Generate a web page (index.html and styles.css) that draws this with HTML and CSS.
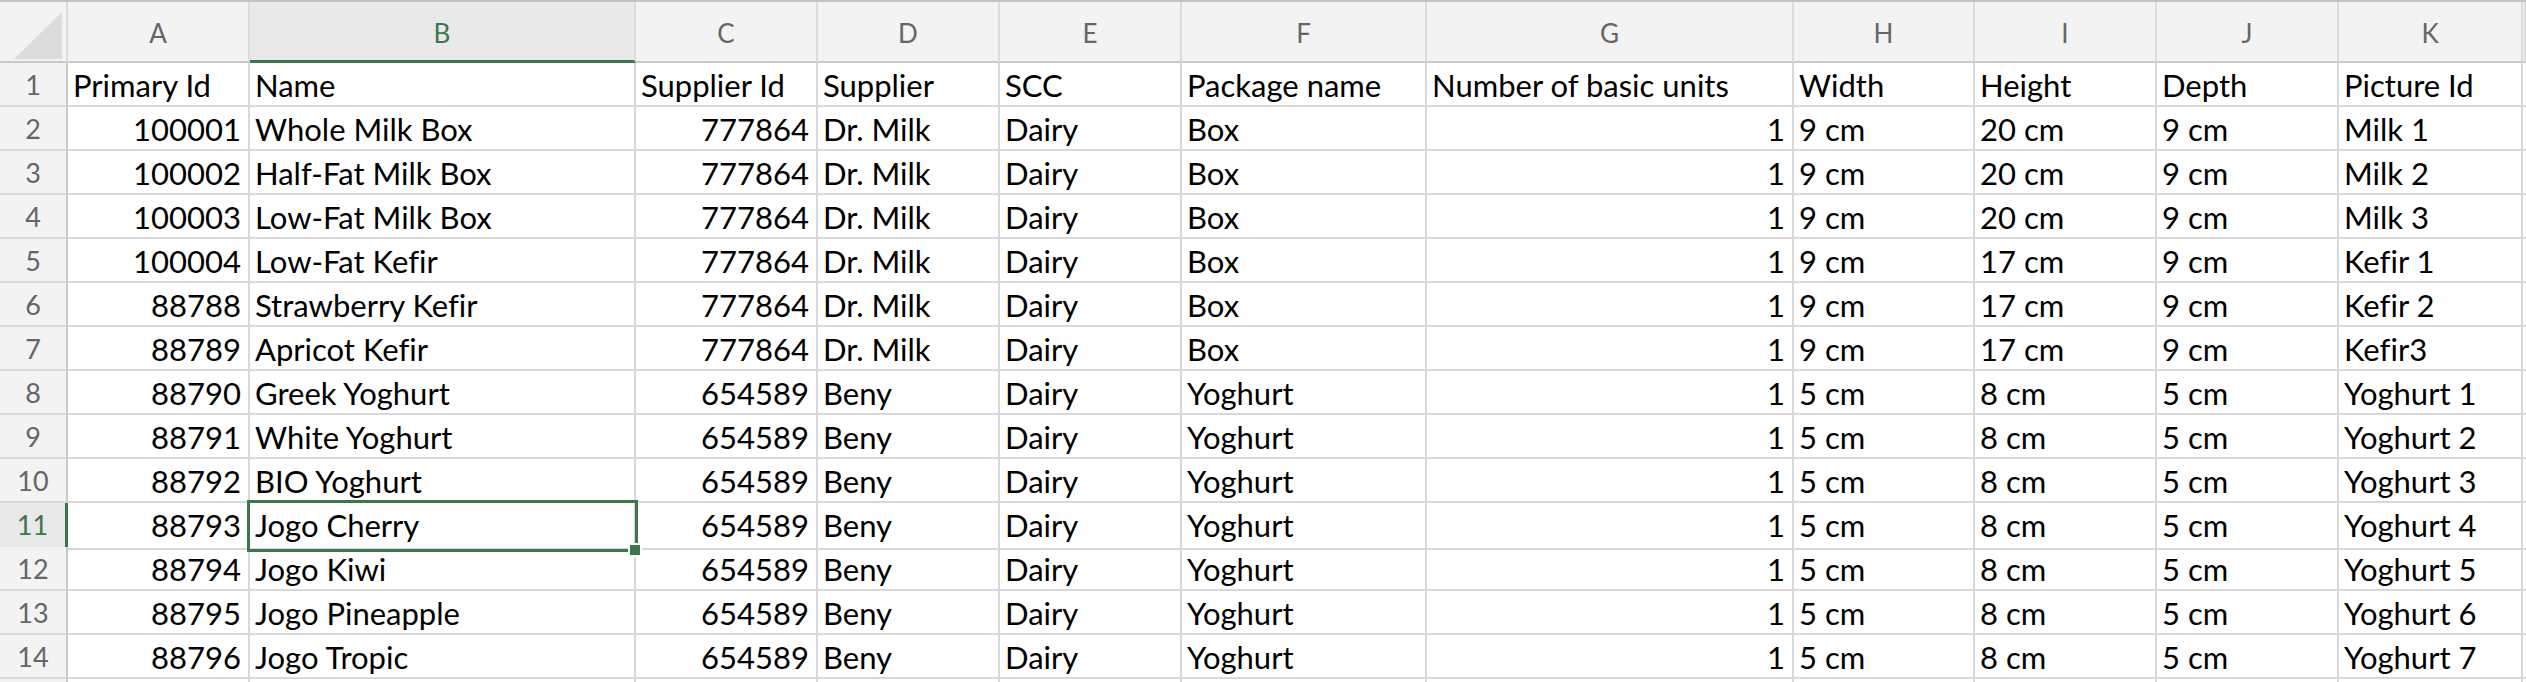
FILE: index.html
```
<html>
<head>
<title>Products</title>
<meta name="viewport" content="width=device-width, initial-scale=1">
<link rel="stylesheet" href="styles.css">
</head>
<body>
  <div class="sheet">
    <div class="row head">
      <div class="corner"><span class="tri"></span></div>
      <div class="ch">A</div>
      <div class="ch sel">B</div>
      <div class="ch">C</div>
      <div class="ch">D</div>
      <div class="ch">E</div>
      <div class="ch">F</div>
      <div class="ch">G</div>
      <div class="ch">H</div>
      <div class="ch">I</div>
      <div class="ch">J</div>
      <div class="ch">K</div>
      <div class="ch"></div>
    </div>
    <div class="row">
      <div class="rh">1</div>
      <div class="c">Primary Id</div><div class="c">Name</div><div class="c">Supplier Id</div><div class="c">Supplier</div><div class="c">SCC</div><div class="c">Package name</div><div class="c">Number of basic units</div><div class="c">Width</div><div class="c">Height</div><div class="c">Depth</div><div class="c">Picture Id</div><div class="c"></div>
    </div>
    <div class="row">
      <div class="rh">2</div>
      <div class="c n">100001</div><div class="c">Whole Milk Box</div><div class="c n">777864</div><div class="c">Dr. Milk</div><div class="c">Dairy</div><div class="c">Box</div><div class="c n">1</div><div class="c">9 cm</div><div class="c">20 cm</div><div class="c">9 cm</div><div class="c">Milk 1</div><div class="c"></div>
    </div>
    <div class="row">
      <div class="rh">3</div>
      <div class="c n">100002</div><div class="c">Half-Fat Milk Box</div><div class="c n">777864</div><div class="c">Dr. Milk</div><div class="c">Dairy</div><div class="c">Box</div><div class="c n">1</div><div class="c">9 cm</div><div class="c">20 cm</div><div class="c">9 cm</div><div class="c">Milk 2</div><div class="c"></div>
    </div>
    <div class="row">
      <div class="rh">4</div>
      <div class="c n">100003</div><div class="c">Low-Fat Milk Box</div><div class="c n">777864</div><div class="c">Dr. Milk</div><div class="c">Dairy</div><div class="c">Box</div><div class="c n">1</div><div class="c">9 cm</div><div class="c">20 cm</div><div class="c">9 cm</div><div class="c">Milk 3</div><div class="c"></div>
    </div>
    <div class="row">
      <div class="rh">5</div>
      <div class="c n">100004</div><div class="c">Low-Fat Kefir</div><div class="c n">777864</div><div class="c">Dr. Milk</div><div class="c">Dairy</div><div class="c">Box</div><div class="c n">1</div><div class="c">9 cm</div><div class="c">17 cm</div><div class="c">9 cm</div><div class="c">Kefir 1</div><div class="c"></div>
    </div>
    <div class="row">
      <div class="rh">6</div>
      <div class="c n">88788</div><div class="c">Strawberry Kefir</div><div class="c n">777864</div><div class="c">Dr. Milk</div><div class="c">Dairy</div><div class="c">Box</div><div class="c n">1</div><div class="c">9 cm</div><div class="c">17 cm</div><div class="c">9 cm</div><div class="c">Kefir 2</div><div class="c"></div>
    </div>
    <div class="row">
      <div class="rh">7</div>
      <div class="c n">88789</div><div class="c">Apricot Kefir</div><div class="c n">777864</div><div class="c">Dr. Milk</div><div class="c">Dairy</div><div class="c">Box</div><div class="c n">1</div><div class="c">9 cm</div><div class="c">17 cm</div><div class="c">9 cm</div><div class="c">Kefir3</div><div class="c"></div>
    </div>
    <div class="row">
      <div class="rh">8</div>
      <div class="c n">88790</div><div class="c">Greek Yoghurt</div><div class="c n">654589</div><div class="c">Beny</div><div class="c">Dairy</div><div class="c">Yoghurt</div><div class="c n">1</div><div class="c">5 cm</div><div class="c">8 cm</div><div class="c">5 cm</div><div class="c">Yoghurt 1</div><div class="c"></div>
    </div>
    <div class="row">
      <div class="rh">9</div>
      <div class="c n">88791</div><div class="c">White Yoghurt</div><div class="c n">654589</div><div class="c">Beny</div><div class="c">Dairy</div><div class="c">Yoghurt</div><div class="c n">1</div><div class="c">5 cm</div><div class="c">8 cm</div><div class="c">5 cm</div><div class="c">Yoghurt 2</div><div class="c"></div>
    </div>
    <div class="row">
      <div class="rh">10</div>
      <div class="c n">88792</div><div class="c">BIO Yoghurt</div><div class="c n">654589</div><div class="c">Beny</div><div class="c">Dairy</div><div class="c">Yoghurt</div><div class="c n">1</div><div class="c">5 cm</div><div class="c">8 cm</div><div class="c">5 cm</div><div class="c">Yoghurt 3</div><div class="c"></div>
    </div>
    <div class="row">
      <div class="rh sel">11</div>
      <div class="c n">88793</div><div class="c active">Jogo Cherry<span class="box"></span><span class="handle"></span></div><div class="c n">654589</div><div class="c">Beny</div><div class="c">Dairy</div><div class="c">Yoghurt</div><div class="c n">1</div><div class="c">5 cm</div><div class="c">8 cm</div><div class="c">5 cm</div><div class="c">Yoghurt 4</div><div class="c"></div>
    </div>
    <div class="row">
      <div class="rh">12</div>
      <div class="c n">88794</div><div class="c">Jogo Kiwi</div><div class="c n">654589</div><div class="c">Beny</div><div class="c">Dairy</div><div class="c">Yoghurt</div><div class="c n">1</div><div class="c">5 cm</div><div class="c">8 cm</div><div class="c">5 cm</div><div class="c">Yoghurt 5</div><div class="c"></div>
    </div>
    <div class="row">
      <div class="rh">13</div>
      <div class="c n">88795</div><div class="c">Jogo Pineapple</div><div class="c n">654589</div><div class="c">Beny</div><div class="c">Dairy</div><div class="c">Yoghurt</div><div class="c n">1</div><div class="c">5 cm</div><div class="c">8 cm</div><div class="c">5 cm</div><div class="c">Yoghurt 6</div><div class="c"></div>
    </div>
    <div class="row">
      <div class="rh">14</div>
      <div class="c n">88796</div><div class="c">Jogo Tropic</div><div class="c n">654589</div><div class="c">Beny</div><div class="c">Dairy</div><div class="c">Yoghurt</div><div class="c n">1</div><div class="c">5 cm</div><div class="c">8 cm</div><div class="c">5 cm</div><div class="c">Yoghurt 7</div><div class="c"></div>
    </div>
    <div class="row">
      <div class="rh"></div>
      <div class="c"></div><div class="c"></div><div class="c"></div><div class="c"></div><div class="c"></div><div class="c"></div><div class="c"></div><div class="c"></div><div class="c"></div><div class="c"></div><div class="c"></div><div class="c"></div>
    </div>
  </div>
</body>
</html>
```
FILE: styles.css
```
html, body {
  height: 682px;
  overflow: hidden;
}
body {
  margin: 0;
  background: #fff;
  font-family: Lato, "Liberation Sans", sans-serif;
  font-variant-ligatures: none;
}
.sheet {
  border-top: 2px solid #c4c4c4;
}
.row {
  display: grid;
  grid-template-columns: 68px 182px 386px 182px 182px 182px 245px 367px 181px 182px 182px 184px 1fr;
  height: 44px;
}
.row > div {
  box-sizing: border-box;
  border-right: 2px solid #d8d8d8;
  border-bottom: 2px solid #d8d8d8;
  white-space: nowrap;
  overflow: hidden;
}
.head {
  height: 61px;
}
.head > div {
  background: #f3f3f3;
  border-bottom-color: #c9c9c9;
  border-right-color: #dcdcdc;
}
.ch {
  padding-top: 6px;
  text-align: center;
  line-height: 50px;
  font-size: 26px;
  color: #666;
}
.ch.sel {
  background: #e9e9e9;
  color: #3b774b;
  border-bottom: 3px solid #3b774b;
}
.corner {
  position: relative;
}
.tri {
  position: absolute;
  left: 14px;
  top: 10px;
  width: 48px;
  height: 47px;
  background: #dcdcdc;
  clip-path: polygon(100% 0, 100% 100%, 0 100%);
}
.rh {
  background: #f3f3f3;
  border-right-color: #c9c9c9 !important;
  text-align: center;
  line-height: 44px;
  font-size: 27px;
  color: #666;
}
.rh.sel {
  background: #e9e9e9;
  color: #3b774b;
  border-right: 3px solid #3b774b !important;
}
.c {
  padding: 0 5px;
  line-height: 45px;
  font-size: 31px;
  color: #000;
}
.c.n {
  text-align: right;
  padding-right: 7px;
}
.c.active {
  overflow: visible;
  position: relative;
}
.box {
  position: absolute;
  left: -3px;
  top: -3px;
  right: -4px;
  bottom: -4px;
  border: 3px solid #3b774b;
  pointer-events: none;
}
.handle {
  position: absolute;
  right: -6px;
  bottom: -7px;
  width: 10px;
  height: 10px;
  background: #3b774b;
  box-shadow: 0 0 0 2px #fff;
}
```
